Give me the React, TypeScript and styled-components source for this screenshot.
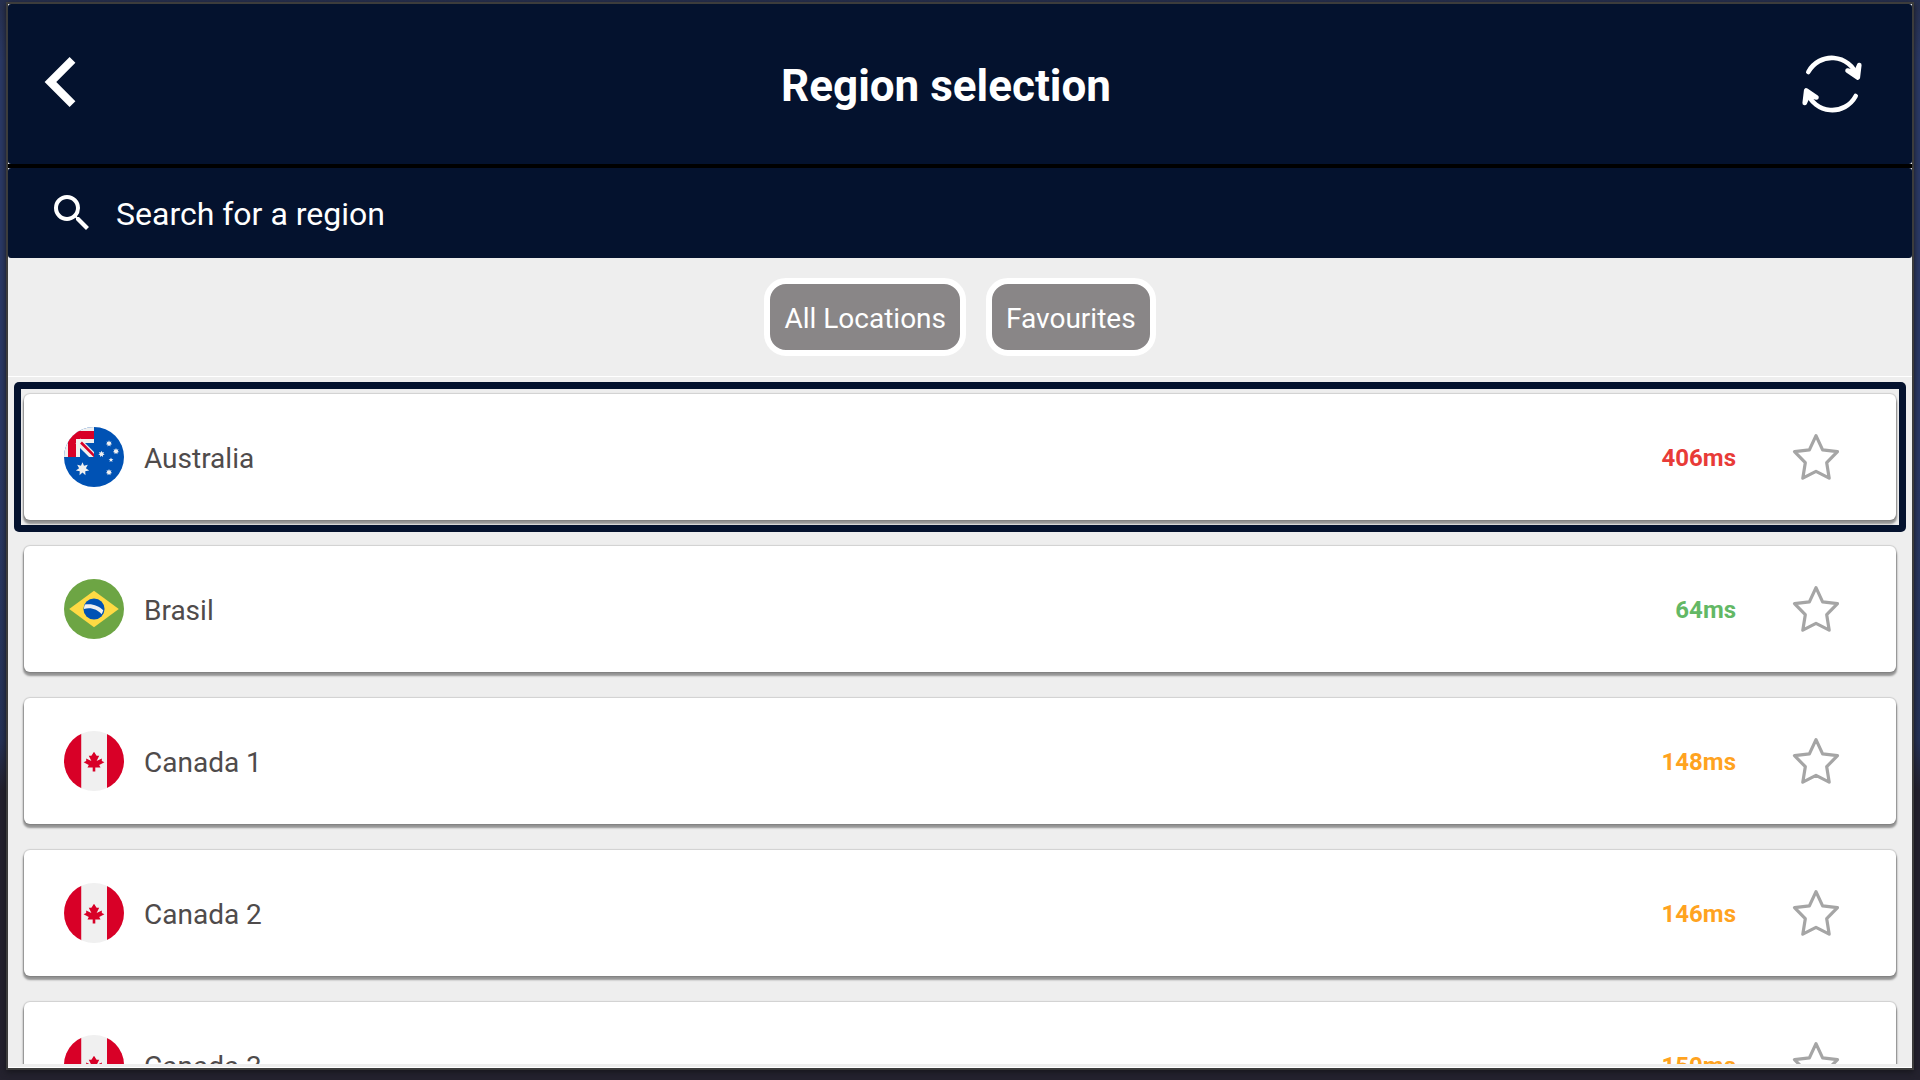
import React, { useState } from 'react';
import styled, { createGlobalStyle } from 'styled-components';

const navy = '#04122e';
const panel = '#eeeeee';

const GlobalStyle = createGlobalStyle`
  * { box-sizing: border-box; }
  html, body, #root { height: 100%; }
  body {
    margin: 0;
    overflow: hidden;
    font-family: Roboto, "Noto Sans", sans-serif;
    background: #24222e;
  }
  button, input { font: inherit; }
`;

const Backdrop = styled.div`
  display: flex;
  height: 100vh;
  padding: 4px 8px 12px;
  background: linear-gradient(#27304f 0, #2b3a66 60px, #2b3a66 460px, #263358 740px, #24222e 790px);
`;

const Dialog = styled.main`
  flex: 1;
  min-width: 0;
  display: flex;
  flex-direction: column;
  padding-bottom: 3px;
  border-bottom: 1px solid #fff;
  background: ${panel};
  box-shadow: 0 0 0 2px #3c3c3c, 0 2px 6px 2px #16161c;
`;

const Header = styled.header`
  display: flex;
  align-items: center;
  justify-content: space-between;
  height: 160px;
  padding: 0 44px 0 16px;
  border-radius: 3px;
  background: ${navy};
  flex: none;
`;

const HeaderTop = styled.div`
  background: #fff;
  border-bottom: 4px solid #000;
  flex: none;
`;

const IconButton = styled.button`
  display: grid;
  place-items: center;
  width: 80px;
  height: 80px;
  padding: 0;
  border: 0;
  background: none;
  color: inherit;
`;

const HeaderButton = styled(IconButton)`
  width: 72px;
  color: #fff;
`;

const Title = styled.h1`
  margin: 0;
  padding-top: 4px;
  font-size: 44px;
  line-height: 52px;
  font-weight: 700;
  color: #fff;
`;

const SearchBar = styled.label`
  display: flex;
  align-items: center;
  gap: 20px;
  height: 90px;
  padding: 0 40px;
  border-radius: 3px;
  background: ${navy};
  color: #fff;
  flex: none;
`;

const SearchInput = styled.input`
  flex: 1;
  min-width: 0;
  height: 56px;
  padding: 2px 0 0;
  border: 0;
  outline: 0;
  background: none;
  font-size: 32px;
  color: #fff;
  &::placeholder { color: #fff; opacity: 1; }
`;

const Filters = styled.nav`
  display: flex;
  justify-content: center;
  gap: 20px;
  padding: 20px;
  flex: none;
`;

const FilterButton = styled.button`
  height: 78px;
  padding: 2px 14px 0;
  border: 6px solid #fff;
  border-radius: 22px;
  background: #898687;
  color: #fff;
  font-size: 28px;
`;

const List = styled.ul`
  flex: 1;
  min-height: 0;
  display: flex;
  flex-direction: column;
  gap: 2px;
  margin: 0;
  padding: 5px 6px 0;
  border-top: 1px solid #fff;
  overflow: hidden;
  list-style: none;
`;

const Item = styled.li<{ $focused: boolean }>`
  flex: none;
  padding: 12px 10px;
  border-radius: 5px;
  box-shadow: ${p => (p.$focused ? `inset 0 0 0 7px ${navy}` : 'none')};
`;

const Card = styled.div`
  display: flex;
  align-items: center;
  height: 126px;
  padding: 0 40px;
  border-radius: 6px;
  background: #fff;
  box-shadow: 0 0 1px 1px #00000020, 0 3px 2px 1px #00000060;
`;

const Flag = styled.svg`
  width: 60px;
  height: 60px;
  margin-right: 20px;
`;

const Name = styled.span`
  flex: 1;
  padding-top: 2px;
  font-size: 28px;
  color: #4f4b4b;
`;

const Ping = styled.span<{ $color: string }>`
  margin-right: 40px;
  padding-top: 2px;
  font-size: 24px;
  font-weight: 700;
  color: ${p => p.$color};
`;

const FavouriteButton = styled(IconButton)`
  color: #a5a5a5;
`;

const BackIcon = () => (
  <svg width="32" height="56" viewBox="0 0 32 56" fill="none" stroke="currentColor" strokeWidth="8.2">
    <path d="M28.500 3.900 6.400 26l22.100 22.100" />
  </svg>
);

const RefreshIcon = () => (
  <svg width="60" height="60" viewBox="0 0 60 60" fill="none" stroke="currentColor" strokeWidth="4.600" strokeLinecap="round" strokeLinejoin="round">
    <path d="M6.300 18A26.600 26.600 0 0 1 55 22" />
    <path fill="currentColor" d="M45.500 16.500 55.800 23.500 57.300 11 54 18.500Z" />
    <path d="M53.700 42A26.600 26.600 0 0 1 5 38" />
    <path fill="currentColor" d="M14.500 43.500 4.200 36.500 2.700 49 6 41.500Z" />
  </svg>
);

const SearchIcon = () => (
  <svg width="48" height="48" viewBox="0 0 24 24" fill="currentColor" aria-hidden="true">
    <path d="M15.500 14h-.79l-.28-.27A6.471 6.471 0 0 0 16 9.500 6.500 6.500 0 1 0 9.500 16c1.610 0 3.090-.59 4.230-1.570l.27.28v.79l5 4.990L20.490 19l-4.990-5zm-6 0C7.010 14 5 11.990 5 9.500S7.010 5 9.500 5 14 7.010 14 9.500 11.990 14 9.500 14z" />
  </svg>
);

const StarIcon = () => (
  <svg width="48" height="48" viewBox="0 0 48 48" fill="none" stroke="currentColor" strokeWidth="3.200" strokeLinejoin="round">
    <path d="M24 2.600 30.600 16.800 45.500 18.600 34.700 29.700 37.200 45.200 24 38.400 10.800 45.200 13.300 29.700 2.500 18.600 17.400 16.800Z" />
  </svg>
);

const starPoints = (cx: number, cy: number, r: number, inner: number, count = 7) =>
  Array.from({ length: count * 2 }, (_, i) => {
    const a = (Math.PI * i) / count - Math.PI / 2;
    const d = i % 2 ? inner : r;
    return `${(cx + d * Math.cos(a)).toFixed(2)},${(cy + d * Math.sin(a)).toFixed(2)}`;
  }).join(' ');

const Australia = () => (
  <Flag viewBox="0 0 60 60" aria-hidden="true">
    <defs>
      <clipPath id="au-disc"><circle cx="30" cy="30" r="30" /></clipPath>
      <clipPath id="au-canton"><path d="M0 0h30v30H0z" /></clipPath>
    </defs>
    <g clipPath="url(#au-disc)">
      <path fill="#0052b4" d="M0 0h60v60H0z" />
      <g clipPath="url(#au-canton)">
        <path fill="#f0f0f0" d="M0 0h30v30H0z" />
        <path fill="#d80027" d="M4 4h26v8H12v18H4z" />
        <path fill="#0052b4" d="M17 16h13v14H15V18z" />
        <path fill="#f0f0f0" d="M12 12h18v4H16v14h-4z" />
        <path stroke="#f0f0f0" strokeWidth="7" d="M14 14 34 34" />
        <path stroke="#d80027" strokeWidth="2.600" d="M17 15.500 33 31.500" />
      </g>
      <g fill="#f0f0f0">
        <polygon points={starPoints(18.500, 42, 6.800, 3.500)} />
        <polygon points={starPoints(45, 16.500, 3.200, 1.800)} />
        <polygon points={starPoints(37.500, 27, 3.200, 1.800)} />
        <polygon points={starPoints(52, 24.300, 3.200, 1.800)} />
        <polygon points={starPoints(45, 45.300, 3.200, 1.800)} />
        <polygon points={starPoints(47, 33, 2.500, 1.100, 5)} />
      </g>
    </g>
  </Flag>
);

const Brasil = () => (
  <Flag viewBox="0 0 512 512" aria-hidden="true">
    <circle cx="256" cy="256" r="256" fill="#6da544" />
    <path fill="#ffda44" d="M256 100.174 467.478 256 256 411.826 44.522 256z" />
    <circle cx="256" cy="256" r="90" fill="#0052b4" />
    <path fill="#f0f0f0" d="M212 250c-14.500 0-29 2-42 6.300 0-14 3-27 8-38.300 11-2 22-3 34-3 48 0 92 20 123 52-3 12-8 23-15 33-26-30-65-50-108-50z" />
  </Flag>
);

const Canada = ({ id }: { id: string }) => (
  <Flag viewBox="0 0 512 512" aria-hidden="true">
    <clipPath id={id}><circle cx="256" cy="256" r="256" /></clipPath>
    <g clipPath={`url(#${id})`}>
      <path fill="#f0f0f0" d="M0 0h512v512H0z" />
      <path fill="#d80027" d="M0 0h147v512H0zM367 0h145v512H367z" />
      <path fill="#d80027" d="m300.522 289.391 44.521-22.261-22.261-11.130v-22.261l-44.521 22.261 22.261-44.522h-22.261L256 178.087l-22.261 33.391h-22.261L233.739 256l-44.522-22.261V256l-22.260 11.130 44.521 22.261-11.130 22.261h44.522v33.391h22.260v-33.391h44.522z" />
    </g>
  </Flag>
);

const slow = '#e83b38';
const fast = '#63b865';
const medium = '#ffa31f';

const regions = [
  { name: 'Australia', ping: '406ms', color: slow, flag: <Australia /> },
  { name: 'Brasil', ping: '64ms', color: fast, flag: <Brasil /> },
  { name: 'Canada 1', ping: '148ms', color: medium, flag: <Canada id="ca-1" /> },
  { name: 'Canada 2', ping: '146ms', color: medium, flag: <Canada id="ca-2" /> },
  { name: 'Canada 3', ping: '150ms', color: medium, flag: <Canada id="ca-3" /> },
];

export default function App() {
  const [query, setQuery] = useState('');
  return (
    <>
      <GlobalStyle />
      <Backdrop>
        <Dialog>
          <HeaderTop>
            <Header>
              <HeaderButton type="button" aria-label="Back"><BackIcon /></HeaderButton>
              <Title>Region selection</Title>
              <HeaderButton type="button" aria-label="Refresh"><RefreshIcon /></HeaderButton>
            </Header>
          </HeaderTop>
          <SearchBar>
            <SearchIcon />
            <SearchInput
              type="text"
              aria-label="Search for a region"
              placeholder="Search for a region"
              value={query}
              onChange={e => setQuery(e.target.value)}
            />
          </SearchBar>
          <Filters>
            <FilterButton type="button">All Locations</FilterButton>
            <FilterButton type="button">Favourites</FilterButton>
          </Filters>
          <List>
            {regions.map((r, i) => (
              <Item key={r.name} $focused={i === 0}>
                <Card>
                  {r.flag}
                  <Name>{r.name}</Name>
                  <Ping $color={r.color}>{r.ping}</Ping>
                  <FavouriteButton type="button" aria-label={`Add ${r.name} to favourites`}><StarIcon /></FavouriteButton>
                </Card>
              </Item>
            ))}
          </List>
        </Dialog>
      </Backdrop>
    </>
  );
}
